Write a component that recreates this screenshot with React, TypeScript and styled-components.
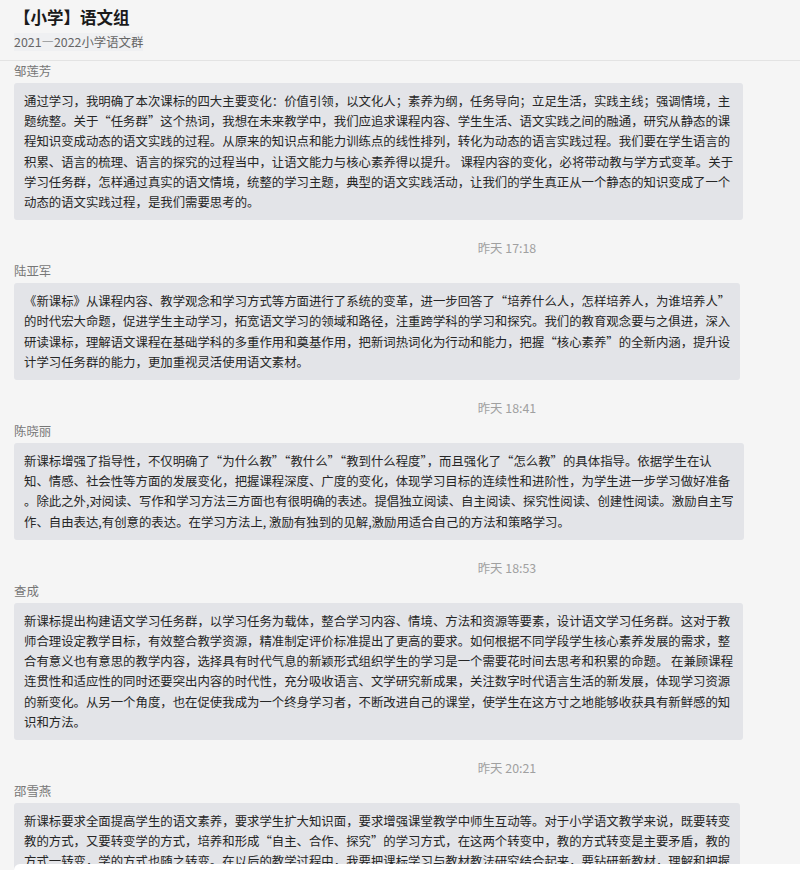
import * as React from "react";
import styled, { createGlobalStyle } from "styled-components";

type Message = {
  time?: string;
  author: string;
  text: string;
};

const messages: Message[] = [
  {
    author: "邹莲芳",
    text: `通过学习，我明确了本次课标的四大主要变化：价值引领，以文化人；素养为纲，任务导向；立足生活，实践主线；强调情境，主
题统整。关于“任务群”这个热词，我想在未来教学中，我们应追求课程内容、学生生活、语文实践之间的融通，研究从静态的课
程知识变成动态的语文实践的过程。从原来的知识点和能力训练点的线性排列，转化为动态的语言实践过程。我们要在学生语言的
积累、语言的梳理、语言的探究的过程当中，让语文能力与核心素养得以提升。 课程内容的变化，必将带动教与学方式变革。关于
学习任务群，怎样通过真实的语文情境，统整的学习主题，典型的语文实践活动，让我们的学生真正从一个静态的知识变成了一个
动态的语文实践过程，是我们需要思考的。`,
  },
  {
    time: "昨天 17:18",
    author: "陆亚军",
    text: `《新课标》从课程内容、教学观念和学习方式等方面进行了系统的变革，进一步回答了“培养什么人，怎样培养人，为谁培养人”
的时代宏大命题，促进学生主动学习，拓宽语文学习的领域和路径，注重跨学科的学习和探究。我们的教育观念要与之俱进，深入
研读课标，理解语文课程在基础学科的多重作用和奠基作用，把新词热词化为行动和能力，把握“核心素养”的全新内涵，提升设
计学习任务群的能力，更加重视灵活使用语文素材。`,
  },
  {
    time: "昨天 18:41",
    author: "陈晓丽",
    text: `新课标增强了指导性，不仅明确了“为什么教”“教什么”“教到什么程度”，而且强化了“怎么教”的具体指导。依据学生在认
知、情感、社会性等方面的发展变化，把握课程深度、广度的变化，体现学习目标的连续性和进阶性，为学生进一步学习做好准备
。除此之外,对阅读、写作和学习方法三方面也有很明确的表述。提倡独立阅读、自主阅读、探究性阅读、创建性阅读。激励自主写
作、自由表达,有创意的表达。在学习方法上, 激励有独到的见解,激励用适合自己的方法和策略学习。`,
  },
  {
    time: "昨天 18:53",
    author: "查成",
    text: `新课标提出构建语文学习任务群，以学习任务为载体，整合学习内容、情境、方法和资源等要素，设计语文学习任务群。这对于教
师合理设定教学目标，有效整合教学资源，精准制定评价标准提出了更高的要求。如何根据不同学段学生核心素养发展的需求，整
合有意义也有意思的教学内容，选择具有时代气息的新颖形式组织学生的学习是一个需要花时间去思考和积累的命题。 在兼顾课程
连贯性和适应性的同时还要突出内容的时代性，充分吸收语言、文学研究新成果，关注数字时代语言生活的新发展，体现学习资源
的新变化。从另一个角度，也在促使我成为一个终身学习者，不断改进自己的课堂，使学生在这方寸之地能够收获具有新鲜感的知
识和方法。`,
  },
  {
    time: "昨天 20:21",
    author: "邵雪燕",
    text: `新课标要求全面提高学生的语文素养，要求学生扩大知识面，要求增强课堂教学中师生互动等。对于小学语文教学来说，既要转变
教的方式，又要转变学的方式，培养和形成“自主、合作、探究”的学习方式，在这两个转变中，教的方式转变是主要矛盾，教的
方式一转变，学的方式也随之转变。在以后的教学过程中，我要把课标学习与教材教法研究结合起来，要钻研新教材，理解和把握`,
  },
];

export default function App() {
  return (
    <>
      <GlobalStyle />
      <Page lang="zh-CN">
        <Header>
          <Title>【小学】语文组</Title>
          <Subtitle>2021—2022小学语文群</Subtitle>
        </Header>
        <Feed>
          {messages.map((m, i) => (
            <MessageBlock key={i}>
              {m.time && <TimeStamp>{m.time}</TimeStamp>}
              <Author>{m.author}</Author>
              <Bubble>{m.text}</Bubble>
            </MessageBlock>
          ))}
        </Feed>
        <Composer />
      </Page>
    </>
  );
}

const GlobalStyle = createGlobalStyle`
  html, body {
    margin: 0;
    padding: 0;
    background: #f5f5f5;
    overflow: hidden;
  }
  body {
    font-family: "Noto Sans CJK SC", "Microsoft YaHei", sans-serif;
    color: #222;
  }
`;

const Page = styled.div`
  width: 800px;
  height: 870px;
  overflow: hidden;
  background: #f5f5f5;
`;

const Header = styled.header`
  padding: 6px 0 8px 14px;
  border-bottom: 1px solid #e3e3e3;
`;

const Title = styled.h1`
  margin: 0;
  font-size: 16.5px;
  line-height: 22px;
  font-weight: 700;
  color: #1a1a1a;
`;

const Subtitle = styled.div`
  display: inline-block;
  margin-top: 4px;
  font-size: 12.4px;
  line-height: 18px;
  color: #666;
  background: #eff0f2;
`;

const Feed = styled.main`
  width: 1014px;
  padding: 0 14px;
  box-sizing: border-box;
`;

const MessageBlock = styled.section`
  display: flex;
  flex-direction: column;
  align-items: flex-start;
`;

const TimeStamp = styled.div`
  align-self: stretch;
  margin-top: 19px;
  text-align: center;
  font-size: 12.4px;
  line-height: 18px;
  color: #a0a0a0;
`;

const Author = styled.div`
  margin-top: 5px;
  font-size: 12.4px;
  line-height: 18px;
  color: #777;

  section:first-child > & {
    margin-top: 1px;
  }
`;

const Bubble = styled.div`
  margin-top: 3px;
  padding: 8px 10px;
  background: #e3e4e8;
  border-radius: 3px;
  font-size: 12.4px;
  line-height: 20.2px;
  color: #262626;
  white-space: pre-line;
`;

const Composer = styled.div`
  position: fixed;
  left: 14px;
  right: 0;
  top: 864px;
  height: 60px;
  background: #fff;
  border-top-left-radius: 6px;
`;
